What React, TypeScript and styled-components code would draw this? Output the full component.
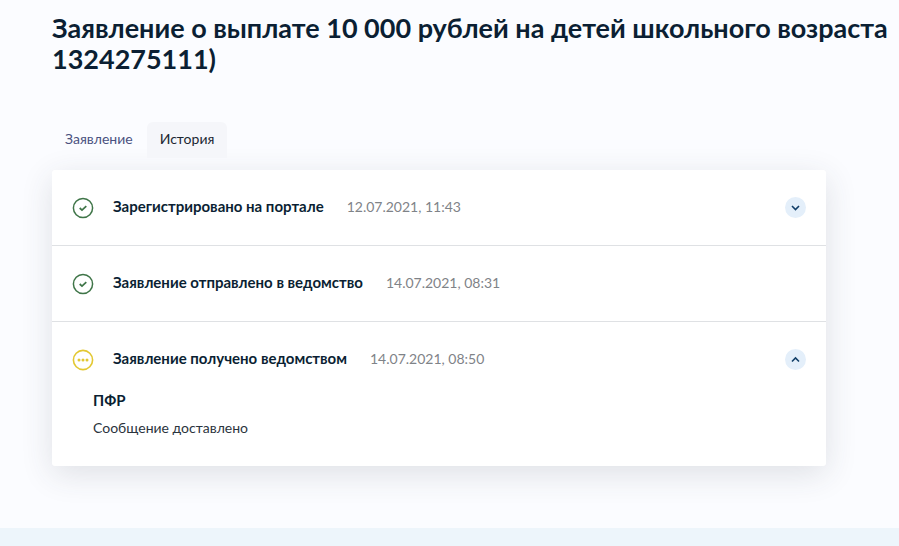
import React from "react";
import styled, { createGlobalStyle } from "styled-components";

const GlobalStyle = createGlobalStyle`
  * { box-sizing: border-box; }
  body { margin: 0; background: #fbfcff; color: #0b1f33; font-family: Lato, "Open Sans", sans-serif; }
  button { font: inherit; }
`;

const Page = styled.div`
  display: flex;
  flex-direction: column;
  min-height: 100vh;
  overflow-x: hidden;
`;

const Content = styled.main`
  flex: 1;
  padding: 12px 73px 60px 52px;
`;

const Title = styled.h1`
  margin: 0;
  font-size: 27px;
  line-height: 31px;
  font-weight: 700;
  white-space: nowrap;
`;

const Tabs = styled.div`
  display: flex;
  gap: 1px;
  margin-top: 48px;
`;

const Tab = styled.button<{ $active?: boolean }>`
  height: 36px;
  padding: 0 13px 3px;
  border: 0;
  border-radius: 6px 6px 0 0;
  background: ${(p) => (p.$active ? "#f5f6fa" : "transparent")};
  color: ${(p) => (p.$active ? "#1c2733" : "#4a5280")};
  font-size: 14px;
  cursor: pointer;
`;

const Card = styled.ol`
  margin: 12px 0 0;
  padding: 0;
  list-style: none;
  background: #fff;
  border-radius: 3px;
  box-shadow: 0 8px 32px rgba(50, 55, 70, 0.14);
`;

const Item = styled.li`
  padding: 0 20px;
  & + & { border-top: 1px solid #dfe1e4; }
`;

const Row = styled.div`
  display: flex;
  align-items: center;
  height: 75px;
`;

const StatusIcon = styled.svg`
  width: 22px;
  height: 22px;
  margin-right: 19px;
  flex: none;
`;

const Status = styled.h2`
  margin: 0 23px 0 0;
  padding-bottom: 3px;
  font-size: 15px;
  line-height: 20px;
  font-weight: 700;
`;

const Time = styled.time`
  padding-bottom: 2px;
  color: #7f8388;
  font-size: 14px;
  line-height: 20px;
`;

const Toggle = styled.button`
  display: grid;
  place-items: center;
  width: 21px;
  height: 21px;
  margin-left: auto;
  padding: 0;
  border: 0;
  border-radius: 50%;
  background: #e4effa;
  color: #123f68;
  cursor: pointer;
`;

const Details = styled.div`
  margin-top: -7px;
  padding: 0 21px 28px;
`;

const Agency = styled.h3`
  margin: 0 0 8px;
  font-size: 15px;
  line-height: 20px;
  font-weight: 700;
`;

const Message = styled.p`
  margin: 0;
  color: #2b343d;
  font-size: 14px;
  line-height: 20px;
`;

const Footer = styled.footer`
  height: 18px;
  background: #edf5fb;
`;

const DoneIcon = () => (
  <StatusIcon viewBox="0 0 22 22" fill="none" role="img" aria-label="Выполнено">
    <circle cx="11" cy="11" r="9.6" stroke="#3f7548" strokeWidth="1.5" />
    <path d="M7.7 11l2.3 2.1 4.3-4" stroke="#3f7548" strokeWidth="1.7" />
  </StatusIcon>
);

const WaitIcon = () => (
  <StatusIcon viewBox="0 0 22 22" fill="none" role="img" aria-label="В работе">
    <circle cx="11" cy="11" r="9.6" stroke="#e3c832" strokeWidth="1.6" />
    <g fill="#e3c832">
      <circle cx="7" cy="11" r="1.5" />
      <circle cx="11" cy="11" r="1.5" />
      <circle cx="15" cy="11" r="1.5" />
    </g>
  </StatusIcon>
);

const Chevron = ({ up }: { up?: boolean }) => (
  <svg width="11" height="11" viewBox="0 0 11 11" fill="none" aria-hidden="true">
    <path d={up ? "M2 7.5l3.5-3.5 3.5 3.5" : "M2 4l3.5 3.5L9 4"} stroke="currentColor" strokeWidth="1.6" />
  </svg>
);

export default function App() {
  return (
    <>
      <GlobalStyle />
      <Page>
        <Content>
          <Title>
            Заявление о выплате 10 000 рублей на детей школьного возраста
            <br />
            1324275111)
          </Title>
          <Tabs role="tablist">
            <Tab role="tab" aria-selected={false}>Заявление</Tab>
            <Tab role="tab" aria-selected $active>История</Tab>
          </Tabs>
          <Card>
            <Item>
              <Row>
                <DoneIcon />
                <Status>Зарегистрировано на портале</Status>
                <Time>12.07.2021, 11:43</Time>
                <Toggle aria-label="Развернуть" aria-expanded={false}><Chevron /></Toggle>
              </Row>
            </Item>
            <Item>
              <Row>
                <DoneIcon />
                <Status>Заявление отправлено в ведомство</Status>
                <Time>14.07.2021, 08:31</Time>
              </Row>
            </Item>
            <Item>
              <Row>
                <WaitIcon />
                <Status>Заявление получено ведомством</Status>
                <Time>14.07.2021, 08:50</Time>
                <Toggle aria-label="Свернуть" aria-expanded><Chevron up /></Toggle>
              </Row>
              <Details>
                <Agency>ПФР</Agency>
                <Message>Сообщение доставлено</Message>
              </Details>
            </Item>
          </Card>
        </Content>
        <Footer />
      </Page>
    </>
  );
}
